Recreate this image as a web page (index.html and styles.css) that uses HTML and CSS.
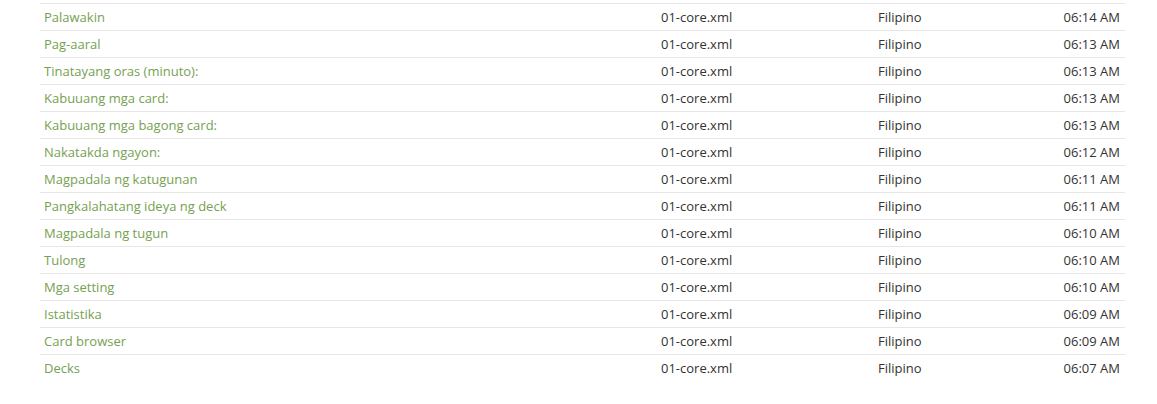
FILE: index.html
```html
<!DOCTYPE html>
<html>
<head>
<meta charset="utf-8">
<link rel="stylesheet" href="styles.css">
</head>
<body>
<div class="page">
<table class="list">
<colgroup><col class="c-name"><col class="c-file"><col class="c-lang"><col class="c-time"></colgroup>
<tbody>
<tr><td><a href="#">Palawakin</a></td><td>01-core.xml</td><td>Filipino</td><td class="time">06:14 AM</td></tr>
<tr><td><a href="#">Pag-aaral</a></td><td>01-core.xml</td><td>Filipino</td><td class="time">06:13 AM</td></tr>
<tr><td><a href="#">Tinatayang oras (minuto):</a></td><td>01-core.xml</td><td>Filipino</td><td class="time">06:13 AM</td></tr>
<tr><td><a href="#">Kabuuang mga card:</a></td><td>01-core.xml</td><td>Filipino</td><td class="time">06:13 AM</td></tr>
<tr><td><a href="#">Kabuuang mga bagong card:</a></td><td>01-core.xml</td><td>Filipino</td><td class="time">06:13 AM</td></tr>
<tr><td><a href="#">Nakatakda ngayon:</a></td><td>01-core.xml</td><td>Filipino</td><td class="time">06:12 AM</td></tr>
<tr><td><a href="#">Magpadala ng katugunan</a></td><td>01-core.xml</td><td>Filipino</td><td class="time">06:11 AM</td></tr>
<tr><td><a href="#">Pangkalahatang ideya ng deck</a></td><td>01-core.xml</td><td>Filipino</td><td class="time">06:11 AM</td></tr>
<tr><td><a href="#">Magpadala ng tugun</a></td><td>01-core.xml</td><td>Filipino</td><td class="time">06:10 AM</td></tr>
<tr><td><a href="#">Tulong</a></td><td>01-core.xml</td><td>Filipino</td><td class="time">06:10 AM</td></tr>
<tr><td><a href="#">Mga setting</a></td><td>01-core.xml</td><td>Filipino</td><td class="time">06:10 AM</td></tr>
<tr><td><a href="#">Istatistika</a></td><td>01-core.xml</td><td>Filipino</td><td class="time">06:09 AM</td></tr>
<tr><td><a href="#">Card browser</a></td><td>01-core.xml</td><td>Filipino</td><td class="time">06:09 AM</td></tr>
<tr><td><a href="#">Decks</a></td><td>01-core.xml</td><td>Filipino</td><td class="time">06:07 AM</td></tr>
</tbody>
</table>
</div>
</body>
</html>
```
FILE: styles.css
```css
html, body {
  margin: 0;
  padding: 0;
  background: #ffffff;
}
body {
  font-family: "Open Sans", "Liberation Sans", sans-serif;
  font-size: 13px;
  color: #333333;
}
.page {
  padding: 3px 32px 0 40px;
}
.list {
  width: 1085px;
  border-collapse: collapse;
  table-layout: fixed;
}
.c-name { width: 617px; }
.c-file { width: 217px; }
.c-lang { width: 140px; }
.c-time { width: auto; }
.list td {
  padding: 4px 4px;
  line-height: 18px;
  border-top: 1px solid #e6e6e6;
  white-space: nowrap;
  vertical-align: middle;
}
.list td.time {
  text-align: right;
  padding-right: 5px;
}
.list a {
  color: #76a152;
  text-decoration: none;
}
```
